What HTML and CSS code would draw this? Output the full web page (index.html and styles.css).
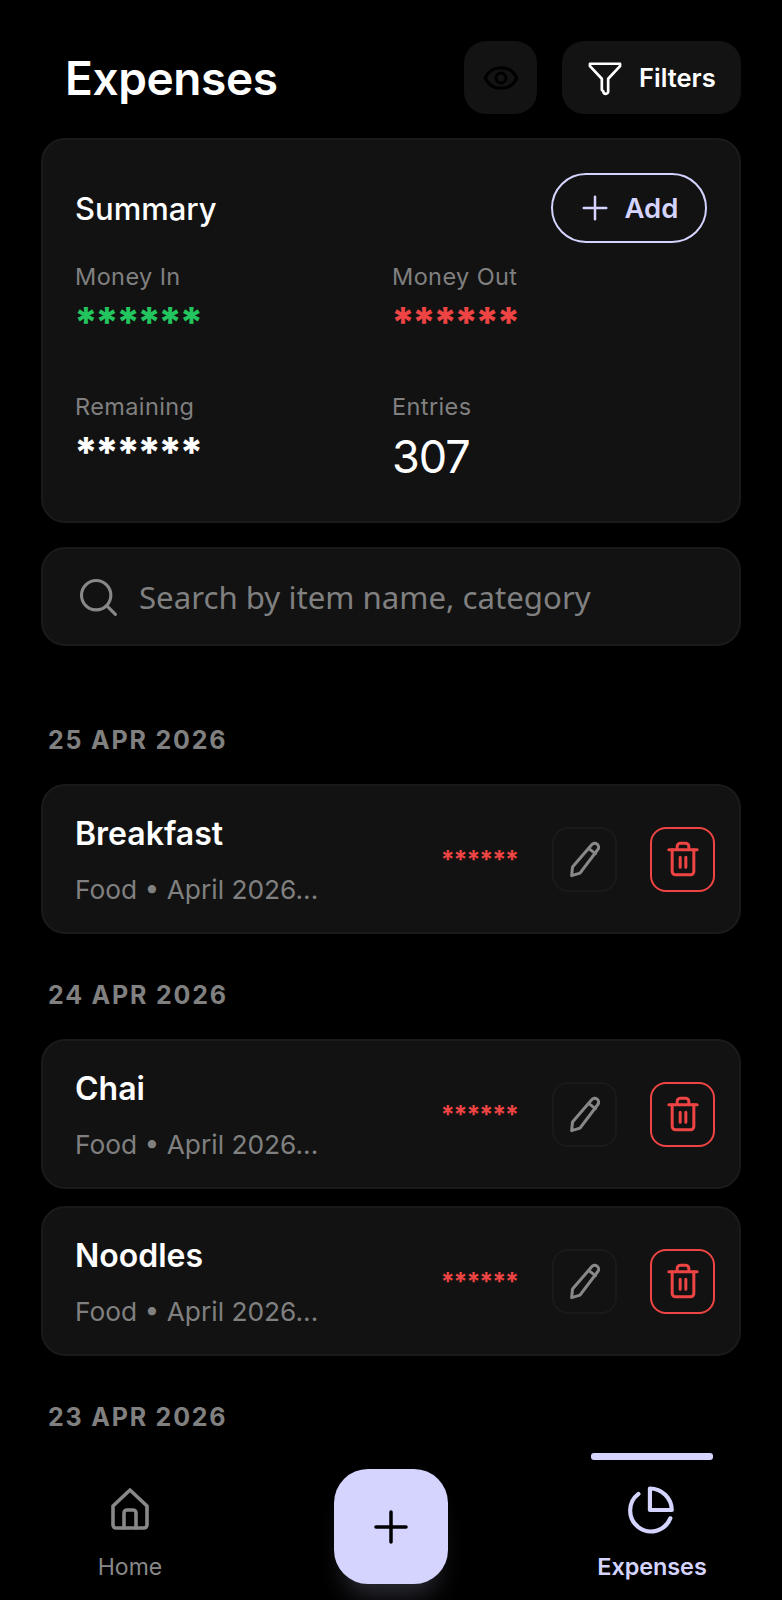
FILE: index.html
```html
<!DOCTYPE html>
<html lang="en">

<head>
    <meta charset="UTF-8">
    <meta name="viewport" content="width=device-width, initial-scale=1.0">
    <title>Expenses</title>
    <link rel="stylesheet" href="styles.css">
</head>

<body>
    <div class="app">
        <header class="top-bar">
            <h1>Expenses</h1>
            <button class="icon-btn eye-btn" type="button" aria-label="Toggle amounts">
                <svg width="40" height="40" viewBox="0 0 24 24" fill="none" stroke="#000" stroke-width="1.8" stroke-linecap="round" stroke-linejoin="round">
                    <path d="M2.5 12C4.5 7.8 8 5.8 12 5.8s7.500 2 9.500 6.200c-2 4.200-5.500 6.200-9.500 6.200s-7.500-2-9.500-6.200z" />
                    <circle cx="12" cy="12" r="3" />
                </svg>
            </button>
            <button class="filter-btn" type="button">
                <svg width="38" height="38" viewBox="0 0 24 24" fill="none" stroke="#fff" stroke-width="1.700" stroke-linecap="round" stroke-linejoin="round">
                    <path d="M2.500 3h19v1.500l-7.500 8V20.500a1.500 1.500 0 0 1-3 0l-1-1V12.500l-7.500-8z" />
                </svg>
                <span>Filters</span>
            </button>
        </header>

        <section class="card summary">
            <div class="summary-head">
                <h2>Summary</h2>
                <button class="add-btn" type="button">
                    <svg width="30" height="30" viewBox="0 0 24 24" fill="none" stroke="#d4d4ff" stroke-width="2" stroke-linecap="round">
                        <path d="M12 3v18M3 12h18" />
                    </svg>
                    <span>Add</span>
                </button>
            </div>
            <div class="stats">
                <div class="stat">
                    <div class="stat-label">Money In</div>
                    <div class="stat-value green">******</div>
                </div>
                <div class="stat">
                    <div class="stat-label">Money Out</div>
                    <div class="stat-value red">******</div>
                </div>
                <div class="stat">
                    <div class="stat-label">Remaining</div>
                    <div class="stat-value">******</div>
                </div>
                <div class="stat">
                    <div class="stat-label">Entries</div>
                    <div class="stat-number">307</div>
                </div>
            </div>
        </section>

        <div class="card search">
            <svg width="44" height="44" viewBox="0 0 24 24" fill="none" stroke="#888" stroke-width="1.700" stroke-linecap="round">
                <circle cx="11" cy="11" r="8" />
                <path d="M17 17l4.500 4.500" />
            </svg>
            <span>Search by item name, category</span>
        </div>

        <main class="list">
            <div class="date first">25 APR 2026</div>
            <div class="card row">
                <div class="row-text">
                    <div class="row-title">Breakfast</div>
                    <div class="row-sub">Food • April 2026...</div>
                </div>
                <div class="row-amount">******</div>
                <button class="row-btn edit" type="button" aria-label="Edit">
                    <svg width="40" height="40" viewBox="0 0 24 24" fill="none" stroke="#888" stroke-width="1.800" stroke-linecap="round" stroke-linejoin="round">
                        <path d="M16 3.500a2.300 2.300 0 0 1 3.700 2.800L9 20.500l-5 1.500.5-5.200z" />
                        <path d="M14.300 5.800l4 3" />
                    </svg>
                </button>
                <button class="row-btn del" type="button" aria-label="Delete">
                    <svg width="40" height="40" viewBox="0 0 24 24" fill="none" stroke="#ef4444" stroke-width="1.800" stroke-linecap="round" stroke-linejoin="round">
                        <path d="M3.500 6.500h17M8.500 6.500V4.500a2 2 0 0 1 2-2h3a2 2 0 0 1 2 2v2" />
                        <path d="M5.500 6.500v13a2 2 0 0 0 2 2h9a2 2 0 0 0 2-2v-13" />
                        <path d="M10.300 11v6M13.700 11v6" />
                    </svg>
                </button>
            </div>

            <div class="date">24 APR 2026</div>
            <div class="card row">
                <div class="row-text">
                    <div class="row-title">Chai</div>
                    <div class="row-sub">Food • April 2026...</div>
                </div>
                <div class="row-amount">******</div>
                <button class="row-btn edit" type="button" aria-label="Edit">
                    <svg width="40" height="40" viewBox="0 0 24 24" fill="none" stroke="#888" stroke-width="1.800" stroke-linecap="round" stroke-linejoin="round">
                        <path d="M16 3.500a2.300 2.300 0 0 1 3.700 2.800L9 20.500l-5 1.500.5-5.200z" />
                        <path d="M14.300 5.800l4 3" />
                    </svg>
                </button>
                <button class="row-btn del" type="button" aria-label="Delete">
                    <svg width="40" height="40" viewBox="0 0 24 24" fill="none" stroke="#ef4444" stroke-width="1.800" stroke-linecap="round" stroke-linejoin="round">
                        <path d="M3.500 6.500h17M8.500 6.500V4.500a2 2 0 0 1 2-2h3a2 2 0 0 1 2 2v2" />
                        <path d="M5.500 6.500v13a2 2 0 0 0 2 2h9a2 2 0 0 0 2-2v-13" />
                        <path d="M10.300 11v6M13.700 11v6" />
                    </svg>
                </button>
            </div>
            <div class="card row next">
                <div class="row-text">
                    <div class="row-title">Noodles</div>
                    <div class="row-sub">Food • April 2026...</div>
                </div>
                <div class="row-amount">******</div>
                <button class="row-btn edit" type="button" aria-label="Edit">
                    <svg width="40" height="40" viewBox="0 0 24 24" fill="none" stroke="#888" stroke-width="1.800" stroke-linecap="round" stroke-linejoin="round">
                        <path d="M16 3.500a2.300 2.300 0 0 1 3.700 2.800L9 20.500l-5 1.500.5-5.200z" />
                        <path d="M14.300 5.800l4 3" />
                    </svg>
                </button>
                <button class="row-btn del" type="button" aria-label="Delete">
                    <svg width="40" height="40" viewBox="0 0 24 24" fill="none" stroke="#ef4444" stroke-width="1.800" stroke-linecap="round" stroke-linejoin="round">
                        <path d="M3.500 6.500h17M8.500 6.500V4.500a2 2 0 0 1 2-2h3a2 2 0 0 1 2 2v2" />
                        <path d="M5.500 6.500v13a2 2 0 0 0 2 2h9a2 2 0 0 0 2-2v-13" />
                        <path d="M10.300 11v6M13.700 11v6" />
                    </svg>
                </button>
            </div>

            <div class="date">23 APR 2026</div>
        </main>

        <nav class="bottom-nav">
            <div class="nav-item">
                <svg width="48" height="48" viewBox="0 0 24 24" fill="none" stroke="#888" stroke-width="1.800" stroke-linecap="round" stroke-linejoin="round">
                    <path d="M3.500 10.500L12 2.500l8.500 8V20a1.500 1.500 0 0 1-1.500 1.500H5A1.500 1.500 0 0 1 3.500 20z" />
                    <path d="M9 21.500v-7.500a1.500 1.500 0 0 1 1.500-1.500h3a1.500 1.500 0 0 1 1.500 1.500v7.500" />
                </svg>
                <span>Home</span>
            </div>
            <button class="fab" type="button" aria-label="Add expense">
                <svg width="38" height="38" viewBox="0 0 24 24" fill="none" stroke="#000" stroke-width="2.200" stroke-linecap="round">
                    <path d="M12 2.500v19M2.500 12h19" />
                </svg>
            </button>
            <div class="nav-item active">
                <svg width="50" height="50" viewBox="0 0 24 24" fill="none" stroke="#d4d4ff" stroke-width="2" stroke-linecap="round" stroke-linejoin="round">
                    <path d="M5.500 3.800A10 10 0 1 0 20.800 15.500" />
                    <path d="M11 1.200A10.500 10.500 0 0 1 21.500 11.500H11z" />
                </svg>
                <span>Expenses</span>
            </div>
        </nav>
    </div>
</body>

</html>
```

FILE: styles.css
```css
* {
    box-sizing: border-box;
}

body {
    margin: 0;
    background-color: #000;
    color: #fff;
    font-family: Inter, "Liberation Sans", sans-serif;
}

button {
    font-family: inherit;
    cursor: pointer;
}

.app {
    display: flex;
    flex-direction: column;
    height: 1600px;
    overflow: hidden;
}

.top-bar {
    display: flex;
    align-items: center;
    height: 73px;
    margin: 41px 41px 24px 65px;
}

.top-bar h1 {
    flex: 1;
    margin: 0;
    font-size: 46px;
    font-weight: 600;
    letter-spacing: -0.4px;
}

.icon-btn,
.filter-btn {
    height: 73px;
    border: none;
    border-radius: 22px;
    background-color: #131313;
}

.eye-btn {
    display: flex;
    align-items: center;
    justify-content: center;
    width: 73px;
    margin-right: 25px;
}

.filter-btn {
    display: flex;
    align-items: center;
    gap: 15px;
    width: 179px;
    padding: 0 24px;
    color: #fff;
    font-size: 25.500px;
    font-weight: 600;
    white-space: nowrap;
}

.card {
    margin: 0 41px;
    border: 2px solid #1a1a1a;
    border-radius: 24px;
    background-color: #121212;
}

.summary {
    height: 385px;
    padding: 33px 32px;
}

.summary-head {
    display: flex;
    align-items: center;
    justify-content: space-between;
}

.summary-head h2 {
    margin: 0;
    font-size: 31px;
    font-weight: 500;
}

.add-btn {
    display: flex;
    align-items: center;
    justify-content: center;
    gap: 15px;
    width: 156px;
    height: 70px;
    padding: 0;
    border: 2px solid #d4d4ff;
    border-radius: 35px;
    background: none;
    color: #d4d4ff;
    font-size: 27.5px;
    font-weight: 600;
}

.stats {
    display: grid;
    grid-template-columns: 317px 1fr;
    grid-auto-rows: 130px;
    margin-top: 20px;
}

.stat-label {
    height: 28px;
    color: #808080;
    font-size: 23.5px;
    line-height: 28px;
    letter-spacing: 0.4px;
}

.stat-value {
    margin-top: 9px;
    margin-left: -1px;
    font-size: 41px;
    font-weight: 800;
    line-height: 44px;
    letter-spacing: -2.800px;
}

.stat-number {
    margin-top: 10px;
    font-size: 45px;
    font-weight: 400;
    line-height: 52px;
    letter-spacing: -1px;
}

.green {
    color: #22c55e;
}

.red {
    color: #ef4444;
}

.search {
    display: flex;
    align-items: center;
    gap: 19px;
    height: 99px;
    margin-top: 24px;
    padding: 0 33px;
    color: #808080;
    font-family: "Noto Sans", sans-serif;
    font-size: 31.200px;
}

.list {
    flex: 1;
    min-height: 0;
}

.date {
    margin: 46px 0 29px 48px;
    color: #808080;
    font-size: 25px;
    font-weight: 700;
    line-height: 30px;
    letter-spacing: 1.800px;
}

.date.first {
    margin-top: 79px;
}

.row {
    display: flex;
    align-items: center;
    height: 150px;
    padding: 0 24px 0 32px;
}

.row.next {
    margin-top: 17px;
}

.row-text {
    flex: 1;
}

.row-title {
    margin-top: 2px;
    font-size: 32px;
    font-weight: 600;
    line-height: 38px;
}

.row-sub {
    margin-top: 21px;
    color: #808080;
    font-size: 26.3px;
    line-height: 32px;
}

.row-amount {
    margin: 2px 34px 0 0;
    color: #ef4444;
    font-size: 25px;
    font-weight: 700;
    line-height: 30px;
    letter-spacing: -1.100px;
}

.row-btn {
    display: flex;
    align-items: center;
    justify-content: center;
    width: 65px;
    height: 65px;
    padding: 0;
    border-radius: 16px;
    background: none;
}

.row-btn.edit {
    border: 2px solid #1a1a1a;
    margin-right: 33px;
}

.row-btn.del {
    border: 2px solid #ef4444;
}

.bottom-nav {
    display: flex;
    align-items: flex-start;
    height: 147px;
}

.nav-item {
    display: flex;
    flex-direction: column;
    align-items: center;
    gap: 20px;
    width: 122px;
    padding-top: 32px;
    color: #888;
    font-size: 23px;
    line-height: 28px;
}

.nav-item:first-child {
    margin-left: 69px;
}

.nav-item.active {
    gap: 17px;
    padding-top: 0;
    color: #d4d4ff;
    font-size: 23.5px;
    font-weight: 600;
    letter-spacing: -0.1px;
}

/* indicator above the active tab */
.nav-item.active::before {
    content: "";
    width: 100%;
    height: 7px;
    margin-bottom: 9px;
    border-radius: 3px;
    background-color: #d4d4ff;
}

.bottom-nav .fab {
    display: flex;
    align-items: center;
    justify-content: center;
    width: 114px;
    height: 115px;
    margin: 16px 143px 0;
    border: none;
    border-radius: 34px;
    background-color: #d4d4ff;
    box-shadow: 0 22px 24px -10px rgba(212, 212, 255, 0.2);
}
```
